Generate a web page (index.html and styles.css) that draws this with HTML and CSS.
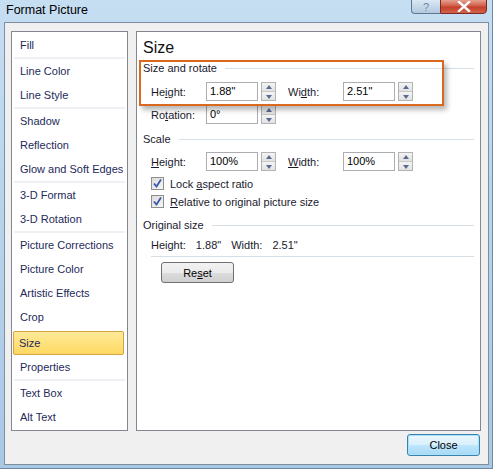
FILE: index.html
```html
<!DOCTYPE html>
<html>
<head>
<meta charset="utf-8">
<link rel="stylesheet" href="styles.css">
</head>
<body>
<div class="window">
  <div class="titlebar">
    <span class="title">Format Picture</span>
    <div class="caption-btns">
      <div class="cbtn help">?</div>
      <div class="cbtn close">
        <svg width="14" height="11" viewBox="0 0 14 11"><path d="M2 1 L12 10 M12 1 L2 10" stroke="#fff" stroke-width="2.4" stroke-linecap="square"/></svg>
      </div>
    </div>
  </div>
  <div class="client">
    <div class="panes">
      <ul class="nav">
        <li>Fill</li>
        <li class="sep"></li>
        <li>Line Color</li>
        <li>Line Style</li>
        <li class="sep"></li>
        <li>Shadow</li>
        <li>Reflection</li>
        <li>Glow and Soft Edges</li>
        <li class="sep"></li>
        <li>3-D Format</li>
        <li>3-D Rotation</li>
        <li class="sep"></li>
        <li>Picture Corrections</li>
        <li>Picture Color</li>
        <li>Artistic Effects</li>
        <li>Crop</li>
        <li class="active">Size</li>
        <li>Properties</li>
        <li class="sep"></li>
        <li>Text Box</li>
        <li>Alt Text</li>
      </ul>
      <div class="content">
        <h1 class="heading">Size</h1>
        <div class="group-head g1"><span>Size and rotate</span><i></i></div>
        <div class="row r-hw">
          <label class="lbl">He<u>i</u>ght:</label>
          <div class="spin"><div class="box">1.88"</div><div class="arrows"><b class="up"></b><b class="down"></b></div></div>
          <label class="lbl lbl2">Wi<u>d</u>th:</label>
          <div class="spin"><div class="box">2.51"</div><div class="arrows"><b class="up"></b><b class="down"></b></div></div>
        </div>
        <div class="row r-rot">
          <label class="lbl">Ro<u>t</u>ation:</label>
          <div class="spin"><div class="box">0°</div><div class="arrows"><b class="up"></b><b class="down"></b></div></div>
        </div>
        <div class="group-head g2"><span>Scale</span><i></i></div>
        <div class="row r-scale">
          <label class="lbl"><u>H</u>eight:</label>
          <div class="spin"><div class="box">100%</div><div class="arrows"><b class="up"></b><b class="down"></b></div></div>
          <label class="lbl lbl2"><u>W</u>idth:</label>
          <div class="spin"><div class="box">100%</div><div class="arrows"><b class="up"></b><b class="down"></b></div></div>
        </div>
        <div class="check c1"><span class="cb"><svg width="11" height="11" viewBox="0 0 11 11"><path d="M2 5.5 L4.5 8.5 L9 1.5" fill="none" stroke="#3b57a8" stroke-width="1.8"/></svg></span><span>Lock <u>a</u>spect ratio</span></div>
        <div class="check c2"><span class="cb"><svg width="11" height="11" viewBox="0 0 11 11"><path d="M2 5.5 L4.5 8.5 L9 1.5" fill="none" stroke="#3b57a8" stroke-width="1.8"/></svg></span><span><u>R</u>elative to original picture size</span></div>
        <div class="group-head g3"><span>Original size</span><i></i></div>
        <div class="orig"><span>Height:</span><span>1.88"</span><span class="ow">Width:</span><span>2.51"</span></div>
        <div class="rule"></div>
        <button class="btn reset">Re<u>s</u>et</button>
        <div class="annot"></div>
      </div>
    </div>
    <div class="footer">
      <button class="btn closebtn">Close</button>
    </div>
  </div>
</div>
</body>
</html>
```
FILE: styles.css
```css
* { box-sizing: border-box; }
html, body { margin: 0; padding: 0; }
body {
  width: 493px;
  height: 469px;
  overflow: hidden;
  font-family: "Liberation Sans", Arial, sans-serif;
  font-size: 11px;
  background: #fff;
}
.window {
  width: 493px;
  height: 469px;
  display: flex;
  flex-direction: column;
  background: linear-gradient(180deg, #c6def2 0%, #b9d5ee 40%, #a9c8e4 100%);
  border-right: 1px solid #6f8aa6;
  border-bottom: 1px solid #6f8aa6;
}
.titlebar {
  height: 22px;
  display: flex;
  align-items: flex-start;
  justify-content: space-between;
  padding-left: 6px;
  flex: none;
}
.title {
  font-family: "Liberation Sans", Arial, sans-serif;
  font-size: 12.5px;
  color: #000;
  margin-top: 3px;
}
.caption-btns {
  display: flex;
  margin-right: 5px;
  margin-top: -1px;
}
.cbtn {
  height: 15px;
  border: 1px solid #5e7894;
  display: flex;
  align-items: center;
  justify-content: center;
}
.help {
  width: 29px;
  border-radius: 0 0 0 4px;
  border-right: none;
  background: linear-gradient(180deg, #dbe8f4 0%, #c6d8ea 50%, #b3c9df 100%);
  color: #7088a2;
  font-size: 11px;
}
.close {
  width: 47px;
  border-radius: 0 0 4px 0;
  border-color: #7a2a20;
  background: linear-gradient(180deg, #e5a190 0%, #d15d48 45%, #c3402a 55%, #d4644c 100%);
}
.client {
  flex: 1;
  margin: 0 3px 3px 4px;
  background: #f0f0f0;
  border: 1px solid #7d8ea1;
  display: flex;
  flex-direction: column;
  padding: 8px 7px 0 6px;
}
.panes {
  display: flex;
  gap: 8px;
  height: 400px;
}
.nav {
  list-style: none;
  margin: 0;
  padding: 1px 2px;
  width: 117px;
  background: #fff;
  border: 1px solid #828790;
  color: #1e2a5a;
}
.nav li {
  height: 24px;
  line-height: 24px;
  padding-left: 6px;
  white-space: nowrap;
}
.nav li.sep {
  height: 2px;
  background: #eef0f4;
}
.nav li.active {
  background: linear-gradient(180deg, #fde99a 0%, #fee27c 50%, #fdd863 100%);
  border: 1px solid #d4a441;
  border-radius: 2px;
  line-height: 22px;
  padding-left: 5px;
  margin: 2px 1px 0 -1px;
}
.content {
  flex: 1;
  background: #fff;
  border: 1px solid #828790;
  position: relative;
  padding: 6px 6px 0 6px;
  color: #1a1a2e;
}
.heading {
  margin: 0;
  font-weight: normal;
  font-size: 16px;
  line-height: 20px;
  height: 20px;
  color: #111;
}
.group-head {
  display: flex;
  align-items: center;
  gap: 8px;
  height: 14px;
  line-height: 14px;
}
.group-head i {
  flex: 1;
  height: 1px;
  background: #d5dfe5;
}
.g1 { margin-top: 3px; }
.g2 { margin-top: 8px; }
.g3 { margin-top: 10px; }
.row {
  display: flex;
  align-items: center;
  padding-left: 8px;
  height: 19px;
}
.r-hw { margin-top: 7px; }
.r-rot { margin-top: 4px; }
.r-scale { margin-top: 6px; }
.lbl { width: 55px; }
.lbl2 { width: 55px; margin-left: 12px; }
u { text-decoration: underline; }
.spin {
  display: flex;
  align-items: center;
  gap: 3px;
}
.box {
  width: 52px;
  height: 19px;
  border: 1px solid #abadb3;
  background: #fff;
  padding-left: 3px;
  line-height: 17px;
  color: #000;
}
.arrows {
  width: 15px;
  height: 19px;
  display: flex;
  flex-direction: column;
  border: 1px solid #b3b3b3;
}
.arrows b {
  flex: 1;
  display: block;
  background: linear-gradient(180deg, #f4f4f4, #e2e2e2);
  position: relative;
}
.arrows b.up { border-bottom: 1px solid #c8c8c8; }
.arrows b::after {
  content: "";
  position: absolute;
  left: 4px;
  top: 2px;
  border-left: 3px solid transparent;
  border-right: 3px solid transparent;
}
.arrows b.up::after { border-bottom: 4px solid #5a6a90; }
.arrows b.down::after { border-top: 4px solid #5a6a90; top: 3px; }
.check {
  display: flex;
  align-items: center;
  gap: 6px;
  padding-left: 8px;
  height: 13px;
}
.c1 { margin-top: 6px; }
.c2 { margin-top: 5px; }
.cb {
  width: 13px;
  height: 13px;
  border: 1px solid #8e8f8f;
  background: linear-gradient(135deg, #dcdcdc, #f6f6f6);
  display: flex;
  align-items: center;
  justify-content: center;
}
.orig {
  display: flex;
  gap: 10px;
  padding-left: 8px;
  margin-top: 6px;
  height: 14px;
  line-height: 14px;
}
.rule {
  height: 1px;
  background: #d5dfe5;
  margin: 4px 0 0 8px;
}
.btn {
  font-family: "Liberation Sans", Arial, sans-serif;
  font-size: 11px;
  color: #000;
  border: 1px solid #707070;
  border-radius: 3px;
  background: linear-gradient(180deg, #f2f2f2 0%, #ebebeb 50%, #dddddd 51%, #cfcfcf 100%);
  height: 21px;
  width: 73px;
  padding: 0;
}
.reset { margin: 5px 0 0 18px; display: block; }
.annot {
  position: absolute;
  left: 2px;
  top: 28px;
  width: 305px;
  height: 46px;
  border: 2px solid #d8691f;
  box-shadow: 3px 4px 5px rgba(0,0,0,0.28);
  pointer-events: none;
}
.footer {
  display: flex;
  justify-content: flex-end;
  padding-top: 3px;
}
.closebtn {
  border-color: #3c7fb1;
  box-shadow: inset 0 0 0 1px #a8e4f8;
  background: linear-gradient(180deg, #eaf6fd 0%, #d9f0fc 50%, #bee6fd 51%, #a7d9f5 100%);
  height: 22px;
  margin-right: 1px;
}
```
